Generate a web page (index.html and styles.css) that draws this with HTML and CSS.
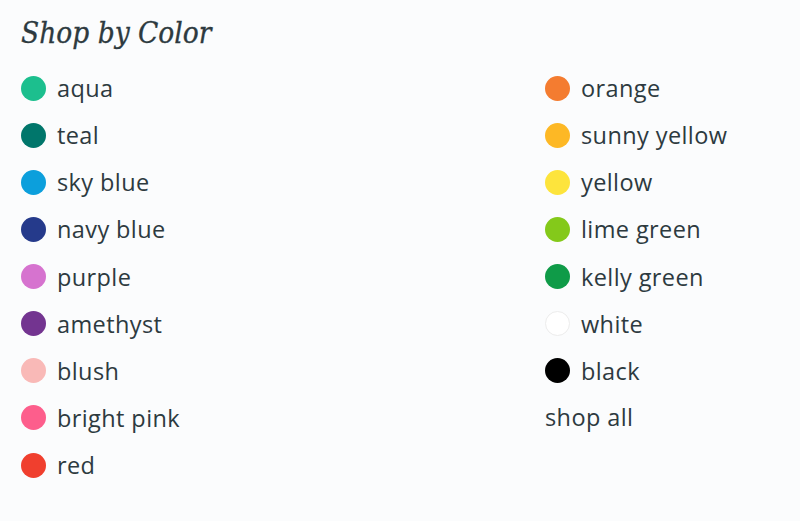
FILE: index.html
```html
<!DOCTYPE html>
<html lang="en">
<head>
<meta charset="utf-8">
<title>Shop by Color</title>
<link rel="stylesheet" href="styles.css">
</head>
<body>
<section class="shop">
  <h2 class="title">Shop by Color</h2>
  <div class="cols">
    <ul class="list">
      <li class="item"><span class="dot" style="background:#1cbf8e"></span>aqua</li>
      <li class="item"><span class="dot" style="background:#00766b"></span>teal</li>
      <li class="item"><span class="dot" style="background:#0c9fdc"></span>sky blue</li>
      <li class="item"><span class="dot" style="background:#253a8b"></span>navy blue</li>
      <li class="item"><span class="dot" style="background:#d673cf"></span>purple</li>
      <li class="item"><span class="dot" style="background:#733490"></span>amethyst</li>
      <li class="item"><span class="dot" style="background:#f9b9b7"></span>blush</li>
      <li class="item"><span class="dot" style="background:#fd5e8c"></span>bright pink</li>
      <li class="item"><span class="dot" style="background:#f03f2e"></span>red</li>
    </ul>
    <ul class="list">
      <li class="item"><span class="dot" style="background:#f47c30"></span>orange</li>
      <li class="item"><span class="dot" style="background:#fdb825"></span>sunny yellow</li>
      <li class="item"><span class="dot" style="background:#fde43c"></span>yellow</li>
      <li class="item"><span class="dot" style="background:#84c91a"></span>lime green</li>
      <li class="item"><span class="dot" style="background:#0f9b48"></span>kelly green</li>
      <li class="item"><span class="dot dot-white"></span>white</li>
      <li class="item"><span class="dot" style="background:#000000"></span>black</li>
      <li class="item item-all">shop all</li>
    </ul>
  </div>
</section>
</body>
</html>
```

FILE: styles.css
```css
html, body {
  margin: 0;
  padding: 0;
  background: #fbfcfd;
}
body {
  color: #2d3a3f;
  font-family: "Open Sans", "Noto Sans", sans-serif;
}
.shop {
  padding: 14px 21px 0 21px;
}
.title {
  margin: 0 0 23px 0;
  font-family: "DejaVu Serif Condensed", "DejaVu Serif", serif;
  font-style: italic;
  font-weight: normal;
  font-size: 29.5px;
  line-height: 38px;
  color: #2d3a3f;
  -webkit-text-stroke: 0.3px #2d3a3f;
}
.cols {
  display: grid;
  grid-template-columns: 524px 1fr;
}
.list {
  list-style: none;
  margin: 0;
  padding: 0;
  display: flex;
  flex-direction: column;
  gap: 21.15px;
}
.item {
  display: flex;
  align-items: center;
  gap: 11px;
  font-size: 23.5px;
  letter-spacing: 0.4px;
  line-height: 26px;
  height: 26px;
}
.dot {
  width: 25px;
  height: 25px;
  border-radius: 50%;
  flex: none;
}
.dot-white {
  background: #ffffff;
  box-sizing: border-box;
  border: 1px solid #ececec;
}
.item-all {
  margin-top: -1px;
}
```
